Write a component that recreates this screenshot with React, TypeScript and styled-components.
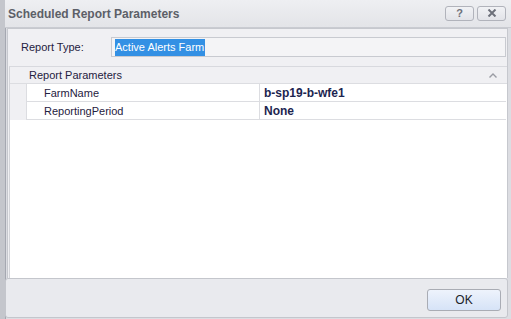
import styled, { createGlobalStyle } from "styled-components";

const GlobalStyle = createGlobalStyle`
  html, body { margin: 0; padding: 0; background: #ffffff; }
  * { box-sizing: border-box; }
`;

const Window = styled.div`
  width: 511px;
  height: 319px;
  display: flex;
  flex-direction: column;
  background-color: #dcdde2;
  border-left: 5px solid #c4c6cc;
  box-shadow: inset 1px 0 0 #a5a8b1;
  font-family: "Liberation Sans", Arial, sans-serif;
  overflow: hidden;
`;

const TitleBar = styled.div`
  height: 28px;
  flex-shrink: 0;
  display: flex;
  align-items: center;
  justify-content: space-between;
  margin-left: -5px;
  padding: 0 5px 0 8px;
  background: linear-gradient(#eeeff2, #e3e4e8);
  border-bottom: 1px solid #c9cbd1;
`;

const Title = styled.span`
  font-size: 12px;
  font-weight: bold;
  color: #5c5f68;
`;

const TitleButtons = styled.div`
  display: flex;
  gap: 3px;
  margin-top: -1px;
`;

const TitleButton = styled.button`
  width: 29px;
  height: 15px;
  padding: 0;
  border: 1px solid #b1b3bb;
  border-radius: 3px;
  background: linear-gradient(#f1f2f5, #e2e3e8);
  color: #6d707a;
  font-family: "Liberation Sans", Arial, sans-serif;
  font-size: 11px;
  font-weight: bold;
  line-height: 13px;
  display: flex;
  align-items: center;
  justify-content: center;
`;

const Body = styled.div`
  flex: 1;
  display: flex;
  flex-direction: column;
  padding: 0 3px 1px 0;
`;

const ContentPanel = styled.div`
  flex: 1;
  display: flex;
  flex-direction: column;
  margin-left: 2px;
  border: 1px solid #c6c8ce;
  border-bottom: none;
  background: #f0f0f3;
`;

const TypeBar = styled.div`
  height: 36px;
  display: flex;
  align-items: center;
  padding: 0 1px 0 13px;
`;

const FieldLabel = styled.span`
  width: 90px;
  font-size: 11px;
  color: #1f2140;
`;

const Field = styled.div`
  flex: 1;
  height: 20px;
  display: flex;
  align-items: center;
  padding-left: 3px;
  border: 1px solid #c8cad0;
  background: #f4f4f6;
  font-size: 11px;
`;

const Selected = styled.span`
  background: #3390e4;
  color: #ffffff;
  padding: 1px 1px 1px 0;
  line-height: 15px;
`;

const Grid = styled.div`
  flex: 1;
  display: flex;
  flex-direction: column;
  margin: 1px 0 0 1px;
  background: #ffffff;
  border-top: 1px solid #d8d9de;
  border-left: 1px solid #d3d4d9;
`;

const CategoryRow = styled.div`
  height: 17px;
  display: flex;
  align-items: center;
  justify-content: space-between;
  padding: 0 10px 0 19px;
  background: #f0f0f3;
  border-bottom: 1px solid #dcdde1;
  font-size: 11px;
  color: #1f2140;
`;

const Row = styled.div`
  height: 18px;
  display: grid;
  grid-template-columns: 16px 233px 1fr;
  margin-right: 1px;
`;

const Indent = styled.div`
  background: #f0f0f3;
`;

const Cell = styled.div<{ $bold?: boolean }>`
  display: flex;
  align-items: center;
  padding-left: ${(p) => (p.$bold ? "4px" : "17px")};
  border-left: 1px solid #dcdde1;
  border-bottom: 1px solid #dcdde1;
  font-size: ${(p) => (p.$bold ? "12px" : "11px")};
  font-weight: ${(p) => (p.$bold ? "bold" : "normal")};
  color: ${(p) => (p.$bold ? "#1c2550" : "#1f2140")};
`;

const Footer = styled.div`
  height: 40px;
  flex-shrink: 0;
  display: flex;
  align-items: center;
  justify-content: flex-end;
  padding: 3px 6px 0 0;
  border: 1px solid #c4c6cc;
  border-radius: 3px;
  background: #e9eaee;
`;

const OkButton = styled.button`
  width: 74px;
  height: 22px;
  border: 1px solid #a9acb4;
  border-radius: 3px;
  background: linear-gradient(#eef3fc, #d6e3f7);
  font-family: "Liberation Sans", Arial, sans-serif;
  font-size: 12px;
  color: #20222a;
`;

const rows = [
  { name: "FarmName", value: "b-sp19-b-wfe1" },
  { name: "ReportingPeriod", value: "None" },
];

export default function App() {
  return (
    <>
      <GlobalStyle />
      <Window>
        <TitleBar>
          <Title>Scheduled Report Parameters</Title>
          <TitleButtons>
            <TitleButton>?</TitleButton>
            <TitleButton>
              <svg width="10" height="8" viewBox="0 0 10 8">
                <path d="M1.5 0.5 L8.5 7.5 M8.5 0.5 L1.5 7.5" stroke="#6d707a" strokeWidth="2" />
              </svg>
            </TitleButton>
          </TitleButtons>
        </TitleBar>
        <Body>
          <ContentPanel>
            <TypeBar>
              <FieldLabel>Report Type:</FieldLabel>
              <Field>
                <Selected>Active Alerts Farm</Selected>
              </Field>
            </TypeBar>
            <Grid>
              <CategoryRow>
                <span>Report Parameters</span>
                <svg width="8" height="5" viewBox="0 0 8 5">
                  <path d="M0.5 4.5 L4 1 L7.5 4.5" stroke="#9a9ca4" strokeWidth="1.4" fill="none" />
                </svg>
              </CategoryRow>
              {rows.map((r) => (
                <Row key={r.name}>
                  <Indent />
                  <Cell>{r.name}</Cell>
                  <Cell $bold>{r.value}</Cell>
                </Row>
              ))}
            </Grid>
          </ContentPanel>
          <Footer>
            <OkButton>OK</OkButton>
          </Footer>
        </Body>
      </Window>
    </>
  );
}
